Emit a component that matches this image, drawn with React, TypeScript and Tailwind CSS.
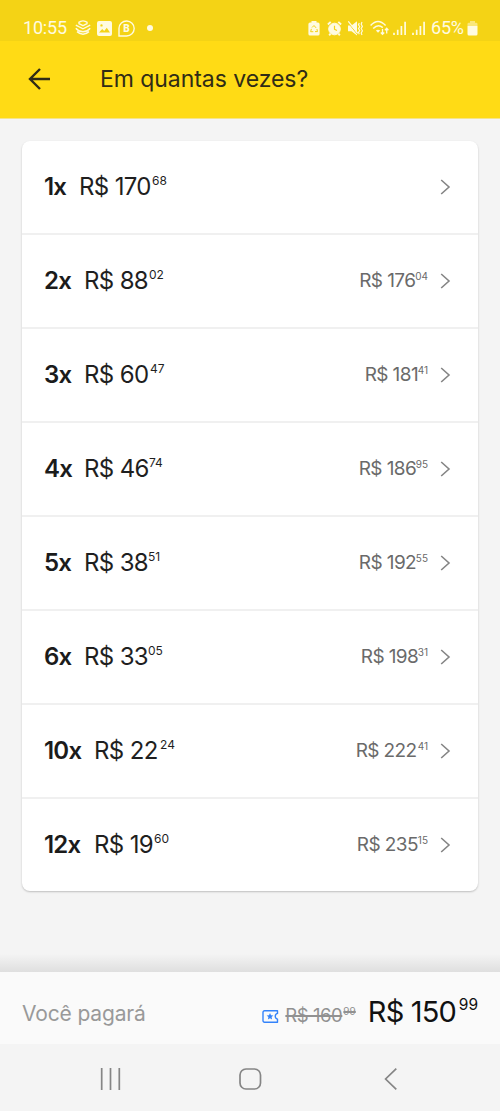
import clsx from "clsx";

interface Installment {
  times: string;
  value: string;
  cents: string;
  total?: string;
  totalCents?: string;
  labelWidth: string;
  valueWidth: string;
  totalWidth?: string;
}

const installments: Installment[] = [
  { times: "1x", value: "R$ 170", cents: "68", labelWidth: "w-[35px]", valueWidth: "w-[73px]" },
  { times: "2x", value: "R$ 88", cents: "02", total: "R$ 176", totalCents: "04", labelWidth: "w-[40px]", valueWidth: "w-[65px]", totalWidth: "w-[56px]" },
  { times: "3x", value: "R$ 60", cents: "47", total: "R$ 181", totalCents: "41", labelWidth: "w-[40px]", valueWidth: "w-[66px]", totalWidth: "w-[53px]" },
  { times: "4x", value: "R$ 46", cents: "74", total: "R$ 186", totalCents: "95", labelWidth: "w-[40px]", valueWidth: "w-[65px]", totalWidth: "w-[57px]" },
  { times: "5x", value: "R$ 38", cents: "51", total: "R$ 192", totalCents: "55", labelWidth: "w-[40px]", valueWidth: "w-[64px]", totalWidth: "w-[57px]" },
  { times: "6x", value: "R$ 33", cents: "05", total: "R$ 198", totalCents: "31", labelWidth: "w-[40px]", valueWidth: "w-[64px]", totalWidth: "w-[57px]" },
  { times: "10x", value: "R$ 22", cents: "24", total: "R$ 222", totalCents: "41", labelWidth: "w-[50px]", valueWidth: "w-[66px]", totalWidth: "w-[62px]" },
  { times: "12x", value: "R$ 19", cents: "60", total: "R$ 235", totalCents: "15", labelWidth: "w-[50px]", valueWidth: "w-[60px]", totalWidth: "w-[61px]" },
];

const StatusBar = () => (
  <div className="flex h-[41px] items-center bg-[#f4d315] pt-[15px] pr-[22px] pl-[23px] font-[Roboto,sans-serif] text-[18px] leading-none text-[#fffbe0]">
    <span className="w-[52px] tracking-[-0.2px]">10:55</span>

    {/* Notifications */}
    <svg width="16" height="16" viewBox="0 0 16 16" fill="none" stroke="currentColor" strokeWidth="1.4">
      <path d="M3.4 2.6Q8 -.8 12.6 2.6" />
      <path d="M.8 5.2 8 8.8 15.2 5.2M3.400 3.400 8 5.600 12.600 3.400" />
      <path d="M.8 8.200Q4 11.800 8 11.800T15.200 8.200M2 11.600Q8 16.800 14 11.600" />
    </svg>
    <svg className="ml-[6px]" width="15" height="15" viewBox="0 0 15 15">
      <path fill="currentColor" fillRule="evenodd" d="M2 0h11a2 2 0 0 1 2 2v11a2 2 0 0 1-2 2H2a2 2 0 0 1-2-2V2a2 2 0 0 1 2-2ZM2 11.500h11L9.800 6.800 7.200 10 5.200 8ZM4.500 3.200a1.200 1.200 0 1 0 0 2.400 1.200 1.200 0 0 0 0-2.400Z" />
    </svg>
    <svg className="ml-[6px]" width="17" height="17" viewBox="0 0 17 17">
      <path d="M1 16V8.300A7.600 7.500 0 1 1 8.600 16Z" fill="none" stroke="currentColor" strokeWidth="1.400" />
      <text x="8.600" y="12" textAnchor="middle" fontFamily="Roboto" fontSize="10" fontWeight="900" fill="currentColor">B</text>
    </svg>
    <span className="ml-[12px] size-[6px] rounded-full bg-[#fffbe0]" />

    {/* System */}
    <div className="ml-auto flex items-center">
      <svg width="12" height="15" viewBox="0 0 12 15">
        <path d="M3.500 0h5v1.600H10a1.600 1.600 0 0 1 1.600 1.600v9.700a1.700 1.700 0 0 1-1.700 1.700H2.100A1.700 1.700 0 0 1 .4 12.900V3.200A1.600 1.600 0 0 1 2 1.600h1.500Z" fill="currentColor" />
        <path d="m4 6.500 2-2 2.100 2.400M8.900 8l.6 2.600H7M5.300 10.700H2.600L3.400 7.900" fill="none" stroke="#f4d315" strokeWidth="1" />
      </svg>
      <svg className="ml-[7px]" width="15" height="15" viewBox="0 0 15 15" fill="none" stroke="currentColor">
        <circle cx="7.500" cy="8" r="5.800" fill="currentColor" />
        <path d="M.9 3.500 3.700.9M14.100 3.500 11.300.9M3.600 12.500 2.200 14.300M11.400 12.500l1.400 1.800" strokeWidth="1.900" />
        <path d="M7.500 4.700v3.500l2.400 1.300" stroke="#f4d315" strokeWidth="1.200" />
      </svg>
      <svg className="ml-[6px]" width="15" height="15" viewBox="0 0 15 15" fill="none" stroke="currentColor">
        <path d="M0 4.500h3.500L9 .2v14.200L3.500 10.200H0Z" fill="currentColor" stroke="none" />
        <path d="m0 1.500 9.500 12" stroke="#f4d315" strokeWidth="1" />
        <path d="m.3.300 9.500 12" strokeWidth="1.200" />
        <path d="m11.300 2-.8 1.800 1.200 1.900-1.200 1.900 1.200 1.900-1.200 1.900.8 1.800M14 1l-.8 2.200 1.200 2.200-1.200 2.200 1.200 2.200-1.200 2.200.8 2" strokeWidth="1.200" />
      </svg>
      <svg className="ml-[7px]" width="20" height="16" viewBox="0 0 20 16" fill="none" stroke="currentColor" strokeWidth="1.500">
        <path d="M.6 5.500Q8 -2.500 15.600 5.500M3.200 8.600Q8 3.500 12.800 7.600" />
        <path d="M5.900 10.600Q8 8.800 10.200 10.600L8 12.800Z" fill="currentColor" stroke="none" />
        <path d="M12.500 9v5M10.800 12.500l1.700 1.900 1.700-1.900M16.700 13.500v-5M15 10.200l1.700-1.900 1.700 1.900" strokeWidth="1.300" />
      </svg>
      <Signal className="ml-[3px]" />
      <Signal className="ml-[6px]" />
      <span className="ml-[6px] w-[36px] tracking-[-0.200px]">65%</span>
      <svg width="11" height="15" viewBox="0 0 11 15">
        <path d="M3 0h5v1.800h1.200A1.300 1.300 0 0 1 10.500 3.100V5H.500V3.100A1.300 1.300 0 0 1 1.800 1.800H3Z" fill="currentColor" opacity=".5" />
        <path d="M.500 5h10v8a1.500 1.500 0 0 1-1.500 1.500H2A1.500 1.500 0 0 1 .500 13Z" fill="currentColor" />
      </svg>
    </div>
  </div>
);

const Signal = ({ className }: { className: string }) => (
  <svg className={className} width="13" height="15" viewBox="0 0 13 15" stroke="currentColor" strokeWidth="1.700">
    <path d="M1 14v-2.300M4.700 14V8.700M8.400 14V5M12.100 14V.8" />
  </svg>
);

const Chevron = () => (
  <svg className="ml-[12px] shrink-0" width="11" height="18" viewBox="0 0 11 18" fill="none" stroke="#858585" strokeWidth="1.600">
    <path d="m1.200 2 7.800 7-7.800 7" />
  </svg>
);

const InstallmentRow = ({ item, last }: { item: Installment; last: boolean }) => (
  <button
    className={clsx(
      "flex w-full items-center pr-[27px] pl-[22px] text-left whitespace-nowrap",
      last ? "h-[92px]" : "h-[94px] border-b-2 border-[#f0f0f0]"
    )}
  >
    <span className={clsx("shrink-0 text-[24px] font-semibold text-[#1b1b1b]", item.labelWidth)}>
      <span className="tracking-[-0.800px]">{item.times}</span>
    </span>
    <span className="flex items-start text-[#1f1f1f]">
      <span className={clsx("text-[24px] leading-[30px] tracking-[-0.650px]", item.valueWidth)}>{item.value}</span>
      <span className="pt-[2px] text-[12px] leading-[14px]">{item.cents}</span>
    </span>

    <span className="ml-auto flex items-center">
      {item.total && (
        <span className="flex items-start text-[#6a6a6a]">
          <span className={clsx("text-[19px] leading-[24px] tracking-[-0.600px]", item.totalWidth)}>{item.total}</span>
          <span className="pt-[2px] text-[10px] leading-[11px]">{item.totalCents}</span>
        </span>
      )}
      <Chevron />
    </span>
  </button>
);

const Footer = () => (
  <footer className="flex h-[72px] items-center bg-[#fafafa] pr-[22px] pl-[22px] whitespace-nowrap">
    <span className="pt-[11px] text-[21px] tracking-[-0.150px] text-[#999]">Você pagará</span>
    <div className="ml-auto flex items-baseline pt-[7px]">
      <svg className="mr-[6px] translate-y-px" width="17" height="13" viewBox="0 0 17 13">
        <path d="M2.500.8h13v2.600a3 3 0 0 0 0 5.800v3h-13A1.500 1.500 0 0 1 1 10.700V2.300A1.500 1.500 0 0 1 2.500.8Z" fill="none" stroke="#3483fa" strokeWidth="1.400" strokeLinejoin="round" />
        <path d="m8 3 1 2.200 2.400.3-1.800 1.600.5 2.400L8 8.300 5.900 9.500l.5-2.400-1.800-1.600L7 5.200Z" fill="#3483fa" />
      </svg>
      <span className="flex items-start text-[#919191] line-through decoration-[1.500px]">
        <span className="w-[58px] text-[18.500px] leading-[24px] tracking-[-0.450px]">R$ 160</span>
        <span className="pt-[3px] text-[10px] leading-[11px]">99</span>
      </span>
      <span className="ml-[12px] flex items-start text-[#111]">
        <span className="w-[91px] text-[29px] leading-[36px] tracking-[-0.800px]">R$ 150</span>
        <span className="pt-[2px] text-[15.500px] leading-[18px]">99</span>
      </span>
    </div>
  </footer>
);

const AndroidNav = () => (
  <nav className="flex h-[67px] items-center bg-[#f4f4f4] pt-[3px] pl-[100px]">
    <svg width="22" height="22" viewBox="0 0 22 22" stroke="#858585" strokeWidth="1.700">
      <path d="M1.700 0v22M10.500 0v22M19.300 0v22" />
    </svg>
    <svg className="ml-[117px]" width="23" height="22" viewBox="0 0 23 22" fill="none" stroke="#858585" strokeWidth="1.700">
      <rect x="1" y="1" width="20.500" height="20" rx="6" />
    </svg>
    <svg className="ml-[122px]" width="13" height="22" viewBox="0 0 13 22" fill="none" stroke="#858585" strokeWidth="1.700">
      <path d="M12.300 .7 1.600 11 12.300 21.300" />
    </svg>
  </nav>
);

export default function App() {
  return (
    <div className="flex h-[1111px] w-[500px] flex-col overflow-hidden bg-[#f4f4f4] font-[Inter,sans-serif]">
      <StatusBar />

      {/* Header */}
      <header className="flex h-[78px] items-center border-b border-[#f5e58a] bg-[#ffdb15] pb-px pl-[28px] text-[#302c16]">
        <svg width="23" height="22" viewBox="0 0 23 22" fill="none" stroke="currentColor" strokeWidth="2.400">
          <path d="M22 11H2M12 1 2 11l10 10" />
        </svg>
        <h1 className="ml-[49px] text-[23px] leading-[30px] tracking-[-0.050px] whitespace-nowrap">Em quantas vezes?</h1>
      </header>

      {/* Installments */}
      <main className="flex-1 px-[22px] pt-[22px]">
        <div className="h-[750px] overflow-hidden rounded-[8px] bg-white shadow-[0_1px_2px_rgba(0,0,0,0.22)]">
          {installments.map((item, i) => (
            <InstallmentRow key={item.times} item={item} last={i === installments.length - 1} />
          ))}
        </div>
      </main>

      <div className="h-[18px] bg-linear-to-b from-[#f4f4f4] to-[#dfdfdf]" />
      <Footer />
      <AndroidNav />
    </div>
  );
}
